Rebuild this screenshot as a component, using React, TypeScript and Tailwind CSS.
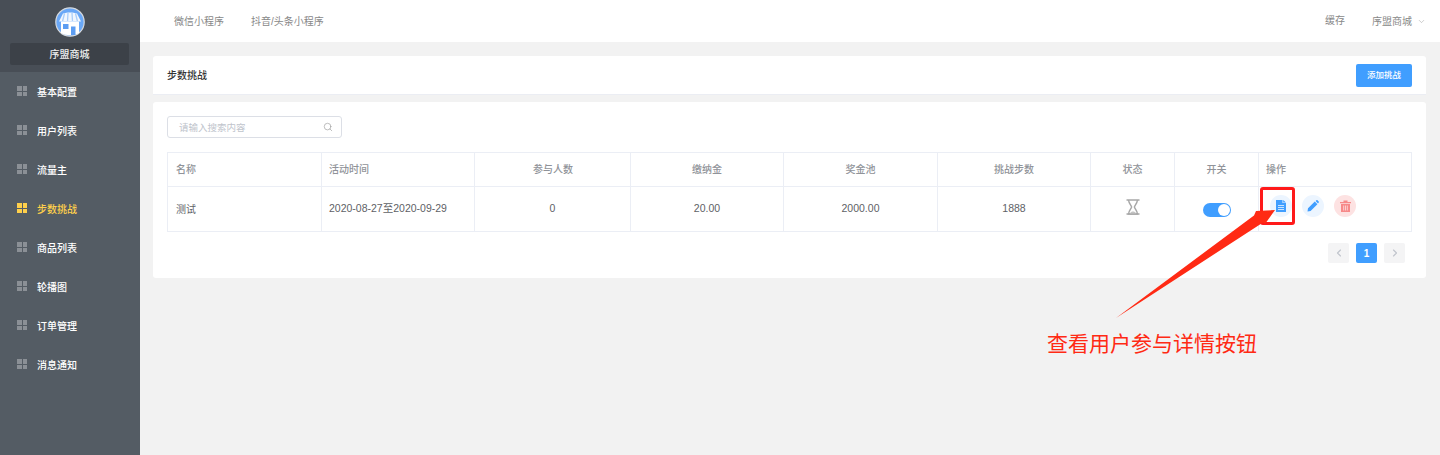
import React from "react";
import { ChevronDown, ChevronLeft, ChevronRight, Search } from "lucide-react";

const FONT = '"Liberation Sans","Noto Sans CJK SC",sans-serif';

const menu = ["基本配置", "用户列表", "流量主", "步数挑战", "商品列表", "轮播图", "订单管理", "消息通知"];

function Grid({ active }: { active?: boolean }) {
  const c = active ? "bg-[#ffd04b]" : "bg-[#8b9096]";
  return (
    <span className="grid grid-cols-2 gap-px w-[10px] h-[10px]">
      <i className={c} />
      <i className={c} />
      <i className={c} />
      <i className={c} />
    </span>
  );
}

function Logo() {
  return (
    <svg width="30" height="30" viewBox="0 0 30 30">
      <circle cx="15" cy="15" r="14.2" fill="#6aa8f7" stroke="#d5d9de" strokeWidth="1.2" />
      <path d="M4 14.5 L8 6.5 C12 5 18 5 22 6.5 L26 14.5 Z" fill="#f2f7fe" />
      <path d="M9.5 6.5 L7.5 14.5 M13 6 L12.5 14.5 M17 6 L17.5 14.5 M20.5 6.5 L22.5 14.5" stroke="#a9cdfa" strokeWidth="1.3" />
      <path d="M6 14.5 H24 V26 C19 29 11 29 6 26 Z" fill="#fff" />
      <rect x="8" y="17" width="5.5" height="5" fill="#5c9df2" />
      <rect x="16" y="19.5" width="4.5" height="8.5" fill="#5c9df2" />
    </svg>
  );
}

function Hourglass() {
  return (
    <svg width="14" height="16" viewBox="0 0 14 16" fill="none" stroke="#a8a8a8" strokeWidth="1.5">
      <path d="M0.5 1 H13.5 M0.5 15 H13.5" strokeWidth="1.7" />
      <path d="M2.5 1 C3 5 5.4 6.5 5.6 8 C5.4 9.5 3 11 2.5 15 H11.5 C11 11 8.6 9.5 8.4 8 C8.6 6.5 11 5 11.5 1" />
      <path d="M4 14.4 C5 12 9 12 10 14.4 Z" fill="#c4c4c4" stroke="none" />
    </svg>
  );
}

function Op({ bg, children }: { bg: string; children: React.ReactNode }) {
  return <span className={`flex items-center justify-center w-[22px] h-[22px] rounded-full ${bg}`}>{children}</span>;
}

const head = [
  ["名称", "text-left pl-[8px]"],
  ["活动时间", "text-left pl-[7px]"],
  ["参与人数", "text-center pl-px"],
  ["缴纳金", "text-center"],
  ["奖金池", "text-center"],
  ["挑战步数", "text-center"],
  ["状态", "text-center"],
  ["开关", "text-center"],
  ["操作", "text-left pl-[7px]"],
];
const widths = ["w-[154px]", "w-[153px]", "w-[156px]", "w-[153px]", "w-[154px]", "w-[153px]", "w-[84px]", "w-[84px]", "w-[153px]"];

export default function App() {
  return (
    <div className="relative flex w-[1440px] h-[455px] overflow-hidden bg-[#f2f2f2] text-[10px] text-[#666]" style={{ fontFamily: FONT }}>
      <aside className="w-[140px] shrink-0 bg-[#545c64] flex flex-col">
        <div className="h-[72px] bg-[#484e56] flex flex-col items-center pt-[7px]">
          <Logo />
          <div className="mt-[6px] mr-px w-[119px] h-[22px] rounded-[2px] bg-[#3c4148] text-[#f0f0f0] flex items-center justify-center font-medium">序盟商城</div>
        </div>
        <nav className="flex flex-col pt-[1px]">
          {menu.map((m, i) => (
            <div key={m} className="h-[39px] flex items-center pl-[17px]">
              <span className="-mt-[3px]">
                <Grid active={i === 3} />
              </span>
              <span className={`ml-[10px] font-medium ${i === 3 ? "text-[#ffd04b]" : "text-white"}`}>{m}</span>
            </div>
          ))}
        </nav>
      </aside>
      <div className="flex-1 flex flex-col">
        <header className="h-[42px] bg-white flex items-center pl-[34px] pr-[14px] text-[#888]">
          <span>微信小程序</span>
          <span className="ml-[27px]">抖音/头条小程序</span>
          <span className="ml-auto -mt-px">缓存</span>
          <span className="ml-[27px] flex items-center gap-[5px] pt-[1px]">
            序盟商城
            <ChevronDown size={9} strokeWidth={1.5} className="text-[#aaa]" />
          </span>
        </header>
        <main className="pl-[13px] pr-[14px] pt-[14px]">
          <section className="h-[39px] bg-white rounded-t-[3px] border-b border-[#ebedf3] flex items-center justify-between pl-[14px] pr-[14px]">
            <b className="text-[#333] font-medium">步数挑战</b>
            <button className="w-[56px] h-[23px] bg-[#409eff] text-white rounded-[2px] text-[8.5px] font-medium">添加挑战</button>
          </section>
          <section className="mt-[7px] h-[176px] bg-white rounded-[3px] px-[14px] pt-[14px]">
            <div className="w-[175px] h-[22px] border border-[#dcdfe6] rounded-[3px] flex items-center justify-between pl-[11px] pr-[8px] text-[#c0c4cc] text-[9.5px]">
              <span className="pt-[2px]">请输入搜索内容</span>
              <Search size={10} strokeWidth={1.5} className="text-[#999]" />
            </div>
            <table className="mt-[14px] w-[1244px] table-fixed border-collapse">
              <colgroup>
                {widths.map((w, i) => (
                  <col key={i} className={w} />
                ))}
              </colgroup>
              <thead>
                <tr className="h-[34px] text-[#909399]">
                  {head.map(([h, c]) => (
                    <th key={h} className={`border border-[#ebeef5] font-medium ${c}`}>{h}</th>
                  ))}
                </tr>
              </thead>
              <tbody>
                <tr className="h-[45px] text-[#606266]">
                  <td className="border border-[#ebeef5] pl-[8px]">测试</td>
                  <td className="border border-[#ebeef5] pl-[7px] text-[10.5px]">2020-08-27至2020-09-29</td>
                  <td className="border border-[#ebeef5] text-center text-[10.5px]">0</td>
                  <td className="border border-[#ebeef5] text-center text-[10.5px]">20.00</td>
                  <td className="border border-[#ebeef5] text-center text-[10.5px]">2000.00</td>
                  <td className="border border-[#ebeef5] text-center text-[10.5px]">1888</td>
                  <td className="border border-[#ebeef5]">
                    <span className="flex justify-center -mt-[5px]"><Hourglass /></span>
                  </td>
                  <td className="border border-[#ebeef5]">
                    <span className="mx-auto mt-[1px] block w-[28px] h-[14px] rounded-full bg-[#409eff] relative">
                      <i className="absolute right-[1px] top-[1px] w-[12px] h-[12px] rounded-full bg-white" />
                    </span>
                  </td>
                  <td className="border border-[#ebeef5]">
                    <div className="flex gap-[10px] pl-[11px] -mt-[6px]">
                      <Op bg="bg-[#ecf5ff]">
                        <svg width="10" height="12" viewBox="0 0 10 12" fill="#409eff">
                          <path d="M0 0 H6.5 V3 H10 V12 H0 Z M7.2 0 L10 2.5 H7.2 Z" />
                          <path d="M2 5.5 H8 M2 7.5 H8 M2 9.5 H8" stroke="#ecf5ff" strokeWidth="0.8" />
                        </svg>
                      </Op>
                      <Op bg="bg-[#ecf5ff]">
                        <svg width="12" height="12" viewBox="0 0 12 12" fill="#409eff">
                          <path d="M0.5 11.5 L1 8.2 L7.8 1.6 L10.4 4.2 L3.6 11 Z M8.6 0.9 L9.4 0.2 C9.8 -0.1 10.2 0 10.5 0.2 L11.7 1.5 C12 1.8 12 2.2 11.7 2.6 L11 3.4 Z" />
                        </svg>
                      </Op>
                      <Op bg="bg-[#fde2e2]">
                        <svg width="11" height="12" viewBox="0 0 11 12" fill="#f78989">
                          <path d="M0 2 H3.5 V0.5 H7.5 V2 H11 V3.2 H0 Z M1 4 H10 V12 H1 Z" />
                          <path d="M3.7 5.5 V10.5 M5.5 5.5 V10.5 M7.3 5.5 V10.5" stroke="#fde2e2" strokeWidth="0.8" />
                        </svg>
                      </Op>
                    </div>
                  </td>
                </tr>
              </tbody>
            </table>
            <div className="mt-[11px] pr-[7px] flex justify-end gap-[7px]">
              <span className="w-[21px] h-[20px] rounded-[2px] bg-[#f4f4f5] flex items-center justify-center text-[#c0c4cc]"><ChevronLeft size={12} strokeWidth={2.2} /></span>
              <span className="w-[21px] h-[20px] rounded-[2px] bg-[#409eff] flex items-center justify-center text-white font-bold">1</span>
              <span className="w-[21px] h-[20px] rounded-[2px] bg-[#f4f4f5] flex items-center justify-center text-[#c0c4cc]"><ChevronRight size={12} strokeWidth={2.2} /></span>
            </div>
          </section>
        </main>
      </div>

      {/* annotation overlay */}
      <div className="absolute left-[1260px] top-[187px] w-[35px] h-[38px] border-[3px] border-[#ff1a1a] rounded-[3px]" />
      <svg className="absolute left-0 top-0 pointer-events-none" width="1440" height="455" fill="none">
        <polygon points="1116,318 1254,215.5 1256,211 1275,210 1265,224 1263,222.5" fill="#ff2a14" />
      </svg>
      <div className="absolute left-[1047px] top-[329px] text-[21px] leading-[26px] text-[#ff2a14] whitespace-nowrap" style={{ fontFamily: '"Noto Sans CJK SC",sans-serif' }}>查看用户参与详情按钮</div>
    </div>
  );
}
